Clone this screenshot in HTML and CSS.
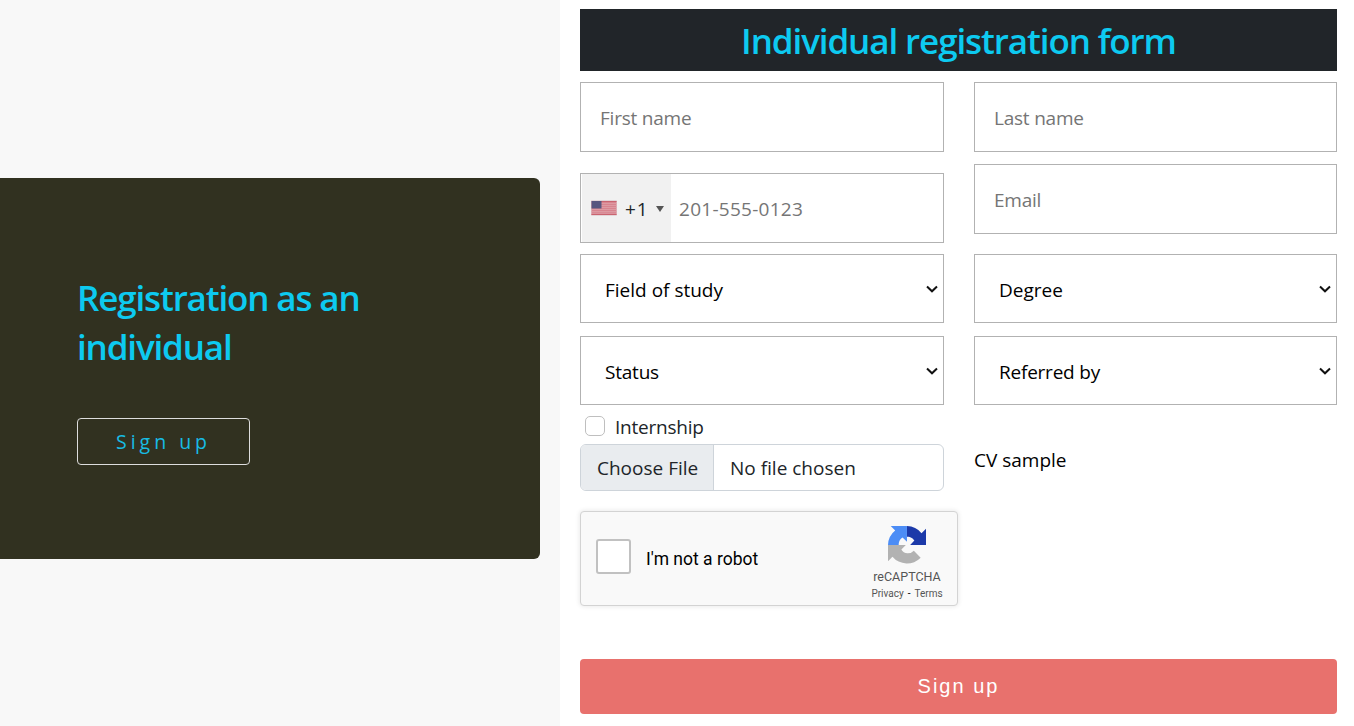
FILE: index.html
```html
<!DOCTYPE html>
<html lang="en">
<head>
<meta charset="utf-8">
<title>Individual registration form</title>
<link rel="stylesheet" href="styles.css">
</head>
<body>
<aside class="side">
  <div class="promo">
    <h2 class="promo-title">Registration as an<br>individual</h2>
    <a class="promo-btn">Sign up</a>
  </div>
</aside>
<main class="main">
  <h1 class="banner">Individual registration form</h1>
  <form class="columns">
    <div class="col col-left">
      <input class="field" type="text" placeholder="First name">
      <div class="field phone">
        <div class="dial">
          <svg class="flag" viewBox="0 0 26 16" width="26" height="16">
            <rect width="26" height="16" rx="1" fill="#e3d6d9"/>
            <rect x=".5" y="1" width="25" height="14" fill="#d8848f"/>
            <path d="M.5 3.5h25M.5 5.5h25M.5 7.5h25M.5 9.5h25M.5 11.5h25M.5 13.2h25" stroke="#e0a3aa" stroke-width=".7"/>
            <path d="M.5 14.5h25M10 1.5h15.500" stroke="#ca6470"/>
            <rect x=".5" y="1" width="10" height="7.500" fill="#57567f"/>
          </svg>
          <span class="code">+1</span>
          <svg class="caret" viewBox="0 0 8 6" width="8" height="6"><path d="M0 0h8L4 6z" fill="#555"/></svg>
        </div>
        <span class="phone-number">201-555-0123</span>
      </div>
      <div class="field select"><span>Field of study</span><svg class="chev" viewBox="0 0 12 8" width="12" height="8"><path d="M1 1.500 6 6.300 11 1.500" fill="none" stroke="#111" stroke-width="2"/></svg></div>
      <div class="field select"><span class="tight">Status</span><svg class="chev" viewBox="0 0 12 8" width="12" height="8"><path d="M1 1.500 6 6.300 11 1.500" fill="none" stroke="#111" stroke-width="2"/></svg></div>
      <label class="check"><span class="box"></span><span class="tight">Internship</span></label>
      <div class="file"><span class="file-btn">Choose File</span><span class="file-name">No file chosen</span></div>
    </div>
    <div class="col col-right">
      <input class="field" type="text" placeholder="Last name">
      <input class="field email" type="email" placeholder="Email">
      <div class="field select"><span>Degree</span><svg class="chev" viewBox="0 0 12 8" width="12" height="8"><path d="M1 1.500 6 6.300 11 1.500" fill="none" stroke="#111" stroke-width="2"/></svg></div>
      <div class="field select"><span class="tight">Referred by</span><svg class="chev" viewBox="0 0 12 8" width="12" height="8"><path d="M1 1.500 6 6.300 11 1.500" fill="none" stroke="#111" stroke-width="2"/></svg></div>
      <a class="cv">CV sample</a>
    </div>
  </form>
  <div class="captcha">
    <span class="captcha-box"></span>
    <span class="captcha-label">I'm not a robot</span>
    <div class="captcha-brand">
      <svg viewBox="0 0 64 64" width="38" height="38">
        <path d="M64 31.950V4.600l-7.560 7.560A32 32 0 0 0 31.930 0v18c7 0 10.500 3.500 12.500 6.500L37.300 31.950z" fill="#1c3aa9"/>
        <path d="M31.930 0H4.600l7.500 7.500A32 32 0 0 0 0 32h18c0-7 3.500-10.500 6.500-12.500l7.430 7.100z" fill="#4c8df6"/>
        <path d="M0 32v27.300l7.500-7.500A32 32 0 0 0 55 53.500L43.500 41.500a14 14 0 0 1-10.500 4.500c-5 0-8.500-2.500-10.500-6.500l7.500-7.500z" fill="#b2b2b2"/>
      </svg>
      <span class="brand-name">reCAPTCHA</span>
      <span class="brand-links">Privacy<span class="dash">-</span>Terms</span>
    </div>
  </div>
  <button class="submit" type="button">Sign up</button>
</main>
</body>
</html>
```
FILE: styles.css
```css
* { box-sizing: border-box; }
body {
  margin: 0;
  display: flex;
  height: 726px;
  overflow: hidden;
  background: #fff;
  color: #212529;
  font: 19px/30px "Open Sans", "Noto Sans", sans-serif;
}
.side {
  width: 560px;
  flex: none;
  padding: 178px 20px 0 0;
  background: #f8f8f8;
}
.promo {
  height: 381px;
  padding: 95px 0 0 77px;
  background: #313120;
  border-radius: 0 6px 6px 0;
}
.promo-title {
  margin: 0 0 47px;
  font-size: 35px;
  line-height: 49px;
  font-weight: 600;
  letter-spacing: -1.15px;
  color: #0dcaf0;
  white-space: nowrap;
}
.promo-btn {
  display: flex;
  align-items: center;
  justify-content: center;
  width: 173px;
  height: 47px;
  border: 1px solid #ddd;
  border-radius: 4px;
  color: #17bce4;
  font-size: 19.5px;
  letter-spacing: 4px;
}
.main { flex: 1; padding: 9px 17px 0 20px; }
.banner {
  margin: 0;
  height: 62px;
  padding-top: 8px;
  background: #212529;
  color: #0dcaf0;
  font-size: 35px;
  line-height: 48px;
  font-weight: 600;
  letter-spacing: -1.1px;
  text-align: center;
}
.columns { display: grid; grid-template-columns: 364px 363px; gap: 30px; margin-top: 11px; }
.col { display: flex; flex-direction: column; }
.field {
  width: 100%;
  height: 70px;
  border: 1px solid #b2b2b2;
  background: #fff;
  padding: 2px 19px 0;
  font: inherit;
  color: #000;
}
.field::placeholder { color: #757575; opacity: 1; letter-spacing: -.22px; }
.tight { letter-spacing: -.22px; }
.phone { display: flex; margin-top: 21px; padding: 0 0 0 1px; }
.dial {
  display: flex;
  align-items: center;
  width: 89px;
  padding: 1px 0 0 9px;
  background: #f1f1f1;
}
.flag { margin-top: -2px; }
.code { margin-left: 8px; color: #212529; letter-spacing: 1px; }
.caret { margin-left: auto; margin-right: 7px; }
.phone-number { padding: 20px 0 0 8px; color: #757575; letter-spacing: .27px; }
.email { margin-top: 12px; }
.select {
  display: flex;
  align-items: center;
  justify-content: space-between;
  height: 69px;
  margin-top: 11px;
  padding: 3px 5px 0 24px;
}
.col-right .select { margin-top: 20px; }
.select + .select, .col-right .select + .select { margin-top: 13px; }
.chev { margin-top: -3px; }
.check { display: flex; align-items: center; height: 39px; padding: 4px 0 0 5px; }
.box { width: 20px; height: 20px; margin: -2px 10px 0 0; border: 1px solid #bfbfbf; border-radius: 5px; }
.file {
  display: flex;
  height: 47px;
  line-height: 46px;
  border: 1px solid #ced4da;
  border-radius: 6px;
  overflow: hidden;
}
.file-btn { width: 133px; padding-left: 16px; background: #e9ecef; border-right: 1px solid #ced4da; white-space: nowrap; }
.file-name { padding-left: 16px; }
.cv { margin-top: 40px; color: #000; }
.captcha {
  display: flex;
  align-items: center;
  width: 378px;
  height: 95px;
  margin-top: 20px;
  padding: 0 15px;
  border: 1px solid #d3d3d3;
  border-radius: 4px;
  background: #f9f9f9;
  box-shadow: 0 0 4px 1px rgba(0,0,0,.08);
  font-family: Roboto, sans-serif;
}
.captcha-box { width: 35px; height: 35px; margin-top: -4px; border: 2px solid #c1c1c1; border-radius: 3px; background: #fff; }
.captcha-label { margin-left: 15px; font-size: 17.5px; color: #000; }
.captcha-brand {
  display: flex;
  flex-direction: column;
  align-items: center;
  width: 72px;
  height: 79px;
  margin: 14px -1px 0 auto;
  color: #555;
}
.brand-name { margin-top: 5px; font-size: 12.500px; line-height: 16px; }
.brand-links { margin-top: 2px; font-size: 10px; line-height: 14px; white-space: nowrap; }
.dash { margin: 0 4px; color: #000; }
.submit {
  display: block;
  width: 100%;
  height: 55px;
  margin-top: 53px;
  padding: 0;
  border: 0;
  border-radius: 4px;
  background: #e8716d;
  color: #fff;
  font: 20px "Liberation Sans", Arial, sans-serif;
  letter-spacing: 2px;
}
```
